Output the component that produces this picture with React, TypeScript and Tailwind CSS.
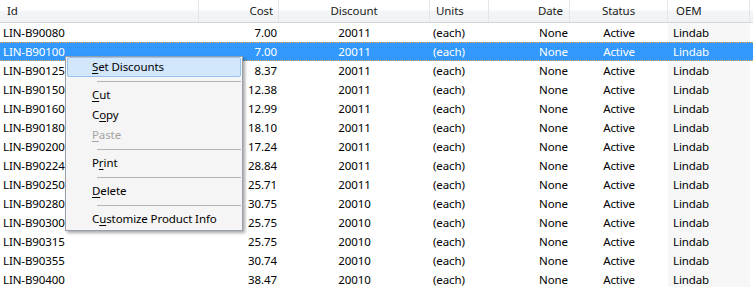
import React from 'react';

type Row = { id: string; cost: string; discount: string };

const rows: Row[] = [
  { id: 'LIN-B90080', cost: '7.00', discount: '20011' },
  { id: 'LIN-B90100', cost: '7.00', discount: '20011' },
  { id: 'LIN-B90125', cost: '8.37', discount: '20011' },
  { id: 'LIN-B90150', cost: '12.38', discount: '20011' },
  { id: 'LIN-B90160', cost: '12.99', discount: '20011' },
  { id: 'LIN-B90180', cost: '18.10', discount: '20011' },
  { id: 'LIN-B90200', cost: '17.24', discount: '20011' },
  { id: 'LIN-B90224', cost: '28.84', discount: '20011' },
  { id: 'LIN-B90250', cost: '25.71', discount: '20011' },
  { id: 'LIN-B90280', cost: '30.75', discount: '20010' },
  { id: 'LIN-B90300', cost: '25.75', discount: '20010' },
  { id: 'LIN-B90315', cost: '25.75', discount: '20010' },
  { id: 'LIN-B90355', cost: '30.74', discount: '20010' },
  { id: 'LIN-B90400', cost: '38.47', discount: '20010' },
];

const font = { fontFamily: '"Segoe UI", "Noto Sans", Arial, sans-serif' };

function HeaderCell({ w, align, children }: { w: string; align: string; children?: React.ReactNode }) {
  return (
    <div className={`${w} ${align} h-full flex items-center border-r border-[#e3e6ea] shrink-0`}>
      {children}
    </div>
  );
}

function MenuItem({ label, u, disabled, active }: { label: string; u: number; disabled?: boolean; active?: boolean }) {
  return (
    <div
      className={`h-5 flex items-center pl-[24px] mx-[1px] rounded-[2px] border ${
        active ? 'bg-[#d2e6fc] border-[#96c3f0]' : 'border-transparent'
      } ${disabled ? 'text-[#a3a3a3]' : 'text-black'}`}
    >
      {label.slice(0, u)}
      <span className="underline underline-offset-2">{label[u]}</span>
      {label.slice(u + 1)}
    </div>
  );
}

function Sep() {
  return (
    <div className="h-2 flex items-center pl-[31px] pr-[1px]">
      <div className="h-px w-full bg-[#b4b4b4]" />
    </div>
  );
}

export default function App() {
  return (
    <div
      className="relative w-[753px] h-[287px] bg-white overflow-hidden text-[11.5px] tracking-[-0.1px] text-black"
      style={font}
    >
      {/* Header */}
      <div className="flex h-[23px] border-b border-[#d5d5d5] bg-[linear-gradient(to_bottom,#ffffff_0%,#ffffff_45%,#f4f5f7_50%,#f1f2f4_100%)] text-[#1b1b1b]">
        <HeaderCell w="w-[199px]" align="justify-start pl-[7px]">Id</HeaderCell>
        <HeaderCell w="w-[80px]" align="justify-end pr-[5px]">Cost</HeaderCell>
        <HeaderCell w="w-[151px]" align="justify-center">Discount</HeaderCell>
        <HeaderCell w="w-[59px]" align="justify-start pl-[6px]">Units</HeaderCell>
        <HeaderCell w="w-[81px]" align="justify-end pr-[6px]">Date</HeaderCell>
        <HeaderCell w="w-[98px]" align="justify-center">Status</HeaderCell>
        <HeaderCell w="w-[82px]" align="justify-start pl-[8px]">OEM</HeaderCell>
        <div className="flex-1" />
      </div>

      {/* Rows */}
      {rows.map((r, i) => {
        const sel = i === 1;
        return (
          <div
            key={r.id}
            className={`flex h-[19px] items-center ${
              sel ? 'bg-[#3399ff] text-white border-y border-dotted border-[#f5a83c]' : ''
            }`}
          >
            <div className="w-[199px] shrink-0 pl-[3px]">{r.id}</div>
            <div className="w-[80px] shrink-0 text-right pr-[2px]">{r.cost}</div>
            <div className="w-[151px] shrink-0 text-center">{r.discount}</div>
            <div className="w-[59px] shrink-0 pl-[3px]">(each)</div>
            <div className="w-[81px] shrink-0 text-right pr-[2px]">None</div>
            <div className="w-[98px] shrink-0 text-center">Active</div>
            <div className={`w-[82px] shrink-0 h-full flex items-center pl-[5px] ${sel ? '' : 'bg-[#f7f7f7]'}`}>Lindab</div>
            <div className="flex-1" />
          </div>
        );
      })}

      {/* Context menu */}
      <div className="absolute left-[65px] top-[56px] w-[178px] bg-[#f5f5f5] border border-[#979fab] pb-[1px] shadow-[2px_2px_3px_rgba(0,0,0,0.35)]">
        <MenuItem label="Set Discounts" u={0} active />
        <Sep />
        <MenuItem label="Cut" u={0} />
        <MenuItem label="Copy" u={1} />
        <MenuItem label="Paste" u={0} disabled />
        <Sep />
        <MenuItem label="Print" u={1} />
        <Sep />
        <MenuItem label="Delete" u={0} />
        <Sep />
        <MenuItem label="Customize Product Info" u={1} />
      </div>
    </div>
  );
}
